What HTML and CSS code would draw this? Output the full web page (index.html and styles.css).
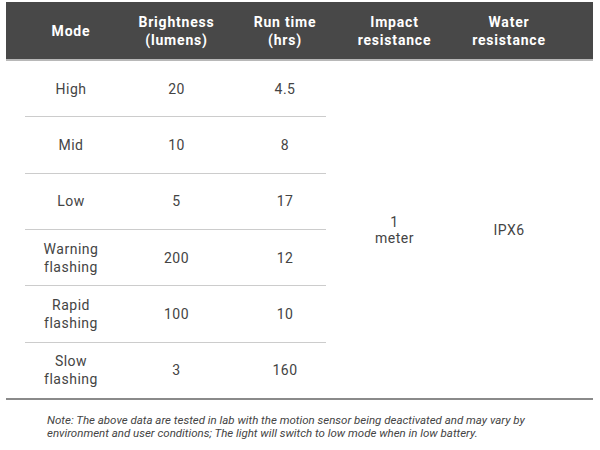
FILE: index.html
```html
<!DOCTYPE html>
<html>
<head>
<meta charset="utf-8">
<link rel="stylesheet" href="styles.css">
</head>
<body>
<div class="spec">
  <div class="head">
    <div class="hcell">Mode</div>
    <div class="hcell">Brightness<br>(lumens)</div>
    <div class="hcell">Run time<br>(hrs)</div>
    <div class="hcell">Impact<br>resistance</div>
    <div class="hcell last">Water<br>resistance</div>
  </div>
  <div class="body">
    <div class="modes">
      <div class="row"><div class="cell">High</div><div class="cell">20</div><div class="cell">4.5</div></div>
      <div class="divider"></div>
      <div class="row"><div class="cell">Mid</div><div class="cell">10</div><div class="cell">8</div></div>
      <div class="divider"></div>
      <div class="row"><div class="cell">Low</div><div class="cell">5</div><div class="cell">17</div></div>
      <div class="divider"></div>
      <div class="row"><div class="cell">Warning<br>flashing</div><div class="cell">200</div><div class="cell">12</div></div>
      <div class="divider"></div>
      <div class="row"><div class="cell">Rapid<br>flashing</div><div class="cell">100</div><div class="cell">10</div></div>
      <div class="divider"></div>
      <div class="row"><div class="cell">Slow<br>flashing</div><div class="cell">3</div><div class="cell">160</div></div>
    </div>
    <div class="cell impact">1<br>meter</div>
    <div class="cell water">IPX6</div>
  </div>
</div>
<p class="note">Note: The above data are tested in lab with the motion sensor being deactivated and may vary by<br>environment and user conditions; The light will switch to low mode when in low battery.</p>
</body>
</html>
```

FILE: styles.css
```css
html, body {
  margin: 0;
  padding: 0;
  background: #ffffff;
}

body {
  padding-top: 2px;
  font-family: Roboto, "Liberation Sans", sans-serif;
}

.spec {
  margin-left: 6px;
  width: 587px;
  border-bottom: 2px solid #8a8a8a;
}

.head {
  display: grid;
  grid-template-columns: 130px 81px 136px 83px 1fr;
  height: 57px;
  background: #484848;
  border-bottom: 2px solid #b8b8b8;
}

.hcell {
  display: flex;
  align-items: center;
  justify-content: center;
  text-align: center;
  color: #ffffff;
  font-weight: 700;
  font-size: 14px;
  line-height: 18px;
  letter-spacing: 0.8px;
  white-space: nowrap;
}

.hcell.last {
  padding-right: 11px;
}

.body {
  display: grid;
  grid-template-columns: 347px 83px 1fr;
  height: 337px;
}

.modes {
  display: flex;
  flex-direction: column;
}

.row {
  flex: 1;
  display: grid;
  grid-template-columns: 130px 81px 136px;
}

.divider {
  height: 1px;
  margin: 0 27px 0 19px;
  background: #cccccc;
}

.cell {
  display: flex;
  align-items: center;
  justify-content: center;
  text-align: center;
  color: #444444;
  font-size: 14px;
  line-height: 18px;
  letter-spacing: 0.5px;
  white-space: nowrap;
}

.impact {
  line-height: 16px;
}

.water {
  padding-right: 11px;
}

.note {
  margin: 14px 0 0 47px;
  font-size: 11.5px;
  line-height: 13px;
  font-style: italic;
  color: #444444;
  letter-spacing: 0;
}
```
